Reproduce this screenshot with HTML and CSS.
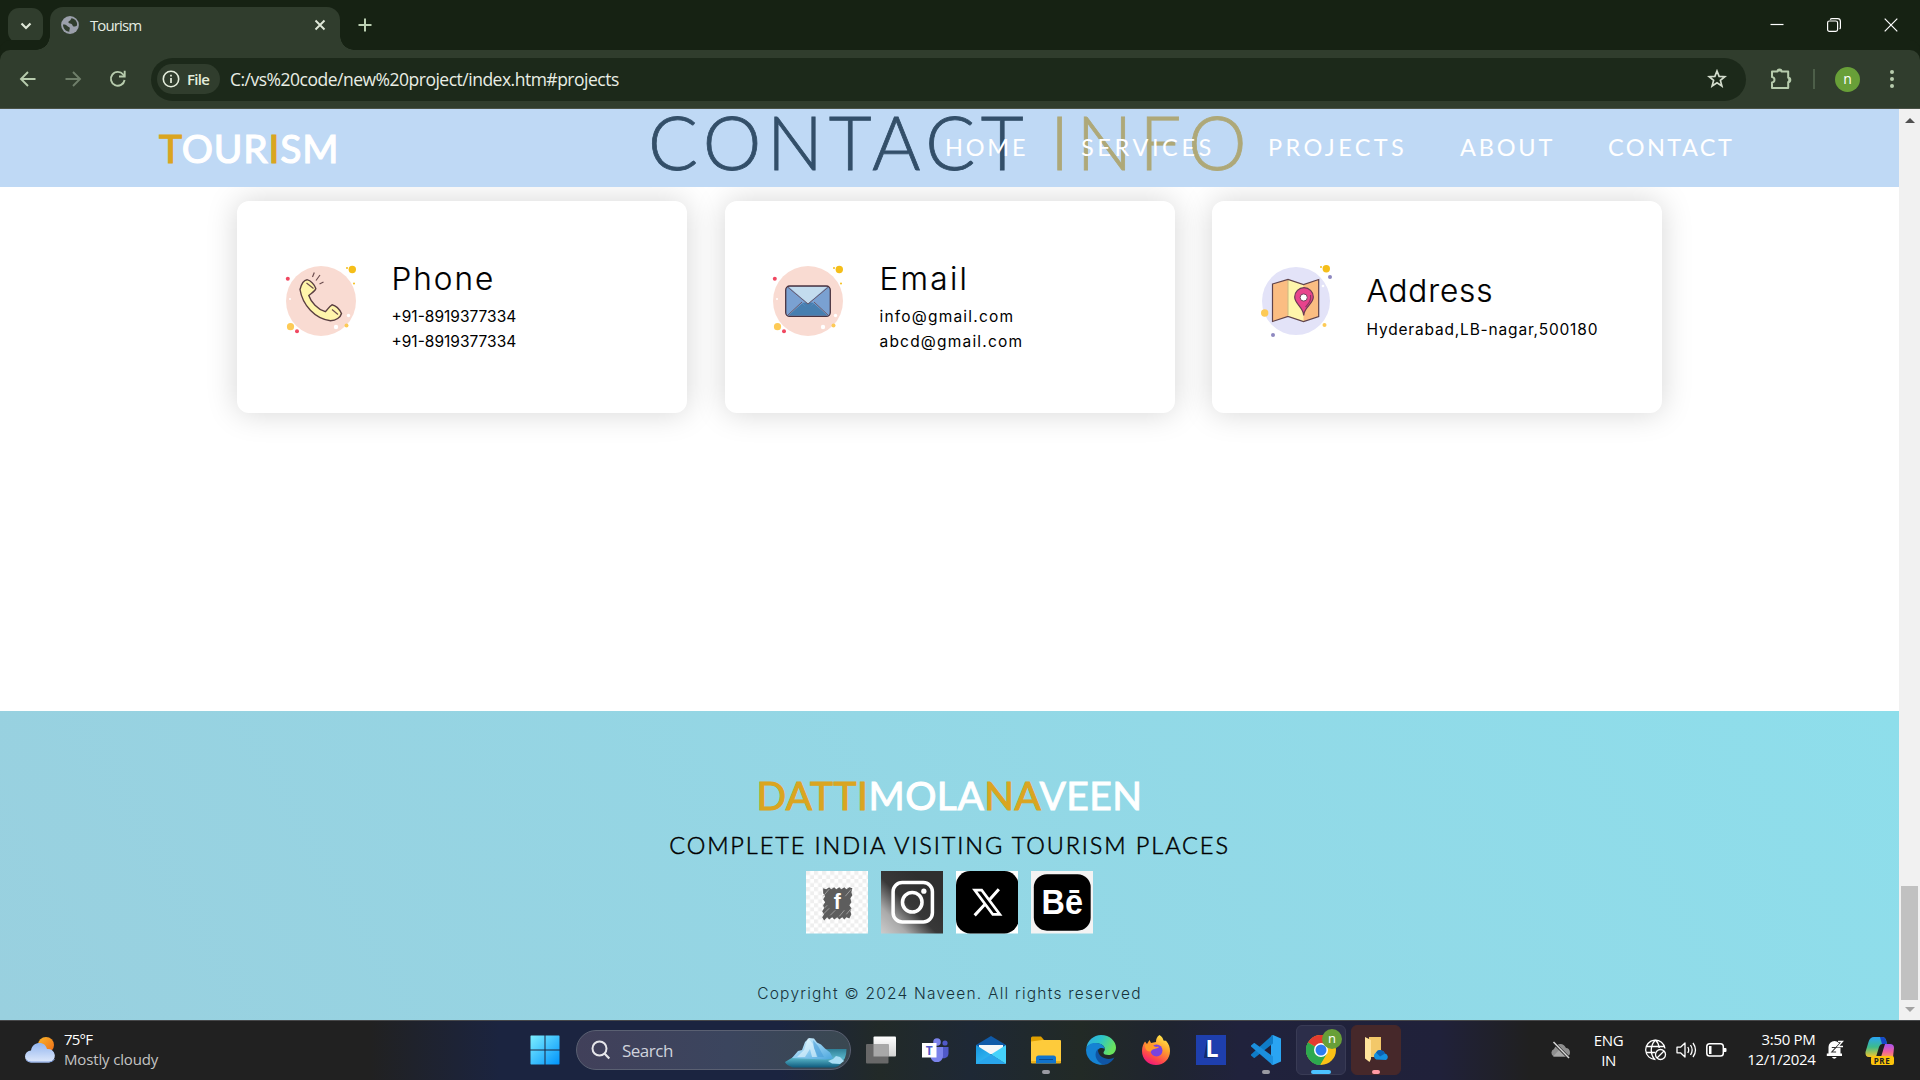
FILE: index.html
```html
<!DOCTYPE html>
<html lang="en">
<head>
<meta charset="utf-8">
<title>Tourism</title>
<link rel="stylesheet" href="styles.css">
</head>
<body>
<div class="screen">

  <div class="tabstrip">
    <div class="tab-search"><svg width="12" height="8" viewBox="0 0 12 8"><path d="M1.5 1.5 6 6l4.500-4.500" fill="none" stroke="#dfe8d8" stroke-width="2.200"/></svg></div>
    <div class="tab">
      <svg class="globe" width="18" height="18" viewBox="0 0 18 18"><circle cx="9" cy="9" r="8.900" fill="#9ba0ab"/><path d="M2 8.500c1.500-.2 3 .2 4.200 1.500.9 1 2.300.8 2.600 2 .2 1.200-.6 1.800-.5 3.800C4.800 15.500 2 12.500 2 8.500zM10.500 2.200c-1 .8-.6 2-1.800 2.600-1.400.7-1.900 1.700-.6 2.400 1.300.6 2.800.2 3.300 1.700.4 1.400 1.300 2 2.600 1.600 1-.3 1.600-.6 2-1 .7-4-2-6.700-5.500-7.300z" fill="#303d2d"/></svg>
      <span class="tab-title">Tourism</span>
      <svg width="12" height="12" viewBox="0 0 12 12"><path d="M1.500 1.500l9 9M10.500 1.500l-9 9" stroke="#dfe8d8" stroke-width="1.900"/></svg>
    </div>
    <div class="new-tab"><svg width="14" height="14" viewBox="0 0 14 14"><path d="M7 .500v13M.500 7h13" stroke="#bcd0b3" stroke-width="2"/></svg></div>
    <div class="window-buttons">
      <svg width="14" height="14" viewBox="0 0 14 14"><path d="M.500 6.500h13" stroke="#fff" stroke-width="1.200"/></svg>
      <svg width="14" height="14" viewBox="0 0 14 14" fill="none" stroke="#fff" stroke-width="1.200"><rect x=".6" y="3" width="10" height="10.400" rx="1.800"/><path d="M3.200 1.600Q3.800.6 5 .6h5.600q2.800 0 2.800 2.800v6q0 1-.8 1.600"/></svg>
      <svg width="14" height="14" viewBox="0 0 14 14"><path d="M.700.700l12.600 12.600M13.300.700L.700 13.300" stroke="#fff" stroke-width="1.200"/></svg>
    </div>
  </div>

  <div class="toolbar">
    <svg class="nav-icon" width="18" height="18" viewBox="0 0 18 18" fill="none" stroke="#b7ccad" stroke-width="1.900"><path d="M16.500 9H2.500M9 2L2 9l7 7"/></svg>
    <svg class="nav-icon" width="18" height="18" viewBox="0 0 18 18" fill="none" stroke="#6f7f6a" stroke-width="1.900"><path d="M1.500 9h14M9 2l7 7-7 7"/></svg>
    <svg class="nav-icon" width="18" height="18" viewBox="0 0 18 18" fill="none" stroke="#b7ccad" stroke-width="1.900"><path d="M15.600 10A6.900 6.900 0 1 1 14.200 4.500L15.500 6"/><path d="M15.700.800V6.500H10"/></svg>
    <div class="omnibox">
      <div class="chip">
        <svg width="18" height="18" viewBox="0 0 18 18"><circle cx="9" cy="9" r="7.700" fill="none" stroke="#e4eddc" stroke-width="1.600"/><path d="M9 8v5M9 4.700v1.700" stroke="#e4eddc" stroke-width="1.700"/></svg>
        <span>File</span>
      </div>
      <span class="url">C:/vs%20code/new%20project/index.htm#projects</span>
      <svg class="star" width="20" height="20" viewBox="0 0 20 20"><path d="M10 2l2.100 5.400 5.800.300-4.500 3.700 1.500 5.600-4.900-3.200L5.100 17l1.500-5.600L2.100 7.700l5.800-.3z" fill="none" stroke="#d3dccd" stroke-width="1.700"/></svg>
    </div>
    <svg class="puzzle" width="22" height="22" viewBox="0 0 22 22"><path d="M2 3.500h5.500a2 2 0 0 1 4 0h6.700v6.300a2 2 0 0 1 0 4.200v6H2v-5.500c3.300-.4 3.300-5.100 0-5.500z" fill="none" stroke="#b7ccad" stroke-width="2" stroke-linejoin="round"/><path d="M7.500 3.500a2 2 0 0 1 4 0zM18.200 9.800a2 2 0 0 1 0 4.200z" fill="#b7ccad"/></svg>
    <span class="divider"></span>
    <span class="avatar">n</span>
    <svg class="dots" width="4" height="18" viewBox="0 0 4 18" fill="#b7ccad"><circle cx="2" cy="2" r="2"/><circle cx="2" cy="9" r="2"/><circle cx="2" cy="16" r="2"/></svg>
  </div>

  <div class="viewport">
    <div class="page">
      <header class="site-header">
        <h1 class="page-title">CONTACT <span>INFO</span></h1>
        <div class="brand"><span>T</span>OUR<span>I</span>SM</div>
        <nav class="menu">
          <a class="m-home">HOME</a><a class="m-services">SERVICES</a><a class="m-projects">PROJECTS</a><a class="m-about">ABOUT</a><a class="m-contact">CONTACT</a>
        </nav>
      </header>

      <main class="cards">
        <section class="card">
          <svg class="card-icon" width="72" height="72" viewBox="0 0 72 72">
            <circle cx="36" cy="36" r="35" fill="#f9dbd2"/>
            <g fill="#fff"><circle cx="5" cy="34" r="1"/><circle cx="63.500" cy="50.500" r="1.700"/><circle cx="51" cy="62" r="2.200"/></g>
            <g fill="#f5be19"><circle cx="67.300" cy="4.500" r="3.700"/><circle cx="62" cy="3" r="1"/><circle cx="69" cy="18.500" r="1"/></g>
            <g fill="#fdca56"><circle cx="5.500" cy="61.700" r="3.600"/><circle cx="61.500" cy="60.500" r="2"/></g>
            <g fill="#f04861"><circle cx="2.800" cy="13.700" r="2"/><circle cx="12" cy="66.200" r="2"/></g>
            <path d="M15 24.500c1.500-6 4.500-9.500 7-9.800 3.500 1 7 4.500 8.800 8.800-.5 2.500-4 4.500-7 7 2 6.500 9 13.800 16.500 16.200 2-1.500 3.500-5.200 6.700-6.900 4 1 7.500 4.500 9.500 8.700-1 4-5.500 7-11 7.200C30 54 17.500 40 15 24.500z" fill="#fff5ab" stroke="#5a3f42" stroke-width="1.400"/>
            <path d="M21.500 18l7 5.500M47 44.500l6 5M27.500 12l1.800-4.500M31 15.500l4-5.500M34.500 19l4-2" fill="none" stroke="#6d4e50" stroke-width="1.200"/>
          </svg>
          <div class="card-text"><h2 class="t-phone">Phone</h2><p class="x-num">+91-8919377334</p><p class="x-num">+91-8919377334</p></div>
        </section>
        <section class="card card-mid">
          <svg class="card-icon" width="72" height="72" viewBox="0 0 72 72">
            <circle cx="36" cy="36" r="35" fill="#f9dbd2"/>
            <g fill="#fff"><circle cx="5" cy="34" r="1"/><circle cx="63.500" cy="50.500" r="1.700"/><circle cx="51" cy="62" r="2.200"/></g>
            <g fill="#f5be19"><circle cx="67.300" cy="4.500" r="3.700"/><circle cx="62" cy="3" r="1"/><circle cx="69" cy="18.500" r="1"/></g>
            <g fill="#fdca56"><circle cx="5.500" cy="61.700" r="3.600"/><circle cx="61.500" cy="60.500" r="2"/></g>
            <g fill="#f04861"><circle cx="2.800" cy="13.700" r="2"/><circle cx="12" cy="66.200" r="2"/></g>
            <rect x="13.700" y="21" width="44.600" height="30.400" rx="4" fill="#7aa1d2"/>
            <path d="M16.500 50.500L30 38.500l6 4.500 6-4.500 13.500 12z" fill="#477fb0"/><path d="M30 38l6-1 6 1-6 6z" fill="#477fb0"/>
            <path d="M16.500 21.500h39L36 38.500z" fill="#c3dcee"/>
            <path d="M15.500 22L36 39l20.500-17M15.500 50.500L30 37M56.500 50.500L42 37" fill="none" stroke="#6a5a6b" stroke-width="1"/>
            <rect x="13.700" y="21" width="44.600" height="30.400" rx="4" fill="none" stroke="#4b3440" stroke-width="1.300"/>
          </svg>
          <div class="card-text"><h2 class="t-email">Email</h2><p class="x-mail">info@gmail.com</p><p class="x-mail">abcd@gmail.com</p></div>
        </section>
        <section class="card card-single">
          <svg class="card-icon" width="72" height="72" viewBox="0 0 72 72">
            <circle cx="35" cy="36" r="34" fill="#e3e3f8"/>
            <g fill="#f5be19"><circle cx="65.300" cy="3.800" r="3.700"/><circle cx="60" cy="2" r="1"/></g>
            <g fill="#fdca56"><circle cx="3.700" cy="48" r="3.700"/><circle cx="63.500" cy="60" r="2"/></g>
            <g fill="#8e88c0"><circle cx="69" cy="12" r="2"/><circle cx="12" cy="70" r="2"/></g>
            <circle cx="62" cy="21" r="1.300" fill="#fff"/>
            <path d="M11.500 19l15.500-4.500 15.500 5L57.700 14.500v37L42.500 56.500 27 51.500 11.500 56.500z" fill="#fbbd82"/>
            <path d="M27 14.500l15.500 5v37L27 51.500z" fill="#fff5ab"/>
            <path d="M27 14.500V50" stroke="#c9ba82" stroke-width="1"/>
            <path d="M11.500 19l15.500-4.500 15.500 5L57.700 14.500v37L42.500 56.500 27 51.500 11.500 56.500z" fill="none" stroke="#5f434b" stroke-width="1.200"/>
            <path d="M42.700 50.500c0-8-9-11.500-9-18.500a9.300 9.300 0 0 1 18.600 0c0 7-9.600 10.500-9.600 18.500z" fill="#e8438c" stroke="#6b3a54" stroke-width="1.200"/>
            <circle cx="42.700" cy="32.500" r="3.600" fill="#fff" stroke="#7b3f5e" stroke-width="1"/>
            <path d="M44.500 42c3-3.500 6-6 5-12" fill="none" stroke="#8d3762" stroke-width="1.200"/>
          </svg>
          <div class="card-text"><h2 class="t-address">Address</h2><p class="x-addr">Hyderabad,LB-nagar,500180</p></div>
        </section>
      </main>

      <footer class="site-footer">
        <div class="owner"><span>DATTI</span>MOLA<span>NA</span>VEEN</div>
        <div class="tagline">COMPLETE INDIA VISITING TOURISM PLACES</div>
        <div class="social">
          <svg viewBox="0 0 62 62">
            <defs><pattern id="check" width="8" height="8" patternUnits="userSpaceOnUse"><rect width="8" height="8" fill="#fff"/><path d="M0 0h4v4H0zM4 4h4v4H4z" fill="#efefef"/></pattern></defs>
            <rect width="62" height="62" fill="url(#check)"/>
            <path d="M17 17l3 1 3-2 2 2 3-2 2 2 3-2 2 2 3-2 2 2 3-2 3 1-1 4 1 3-2 3 1 4-2 3 2 3-1 3 1 3-2 4-3-1-2 2-2-2-3 2-2-2-3 2-2-2-3 2-2-2-3 3-2-3 2-3-2-3 2-3-1-3 2-3-2-3 2-3-2-3z" fill="#5d5d5d"/>
            <path d="M17 25l6-7M17 43l6-6M33 45l5-6M39 25l6-7M18 37l3-3M40 43l5-6M24 44l5-5" stroke="#aaa" stroke-width=".8"/>
            <text x="31" y="38" class="fb">f</text>
          </svg>
          <svg viewBox="0 0 62 62">
            <defs><linearGradient id="insta" x1="0" y1="1" x2=".75" y2=".25"><stop offset="0" stop-color="#ccc"/><stop offset=".28" stop-color="#aaa"/><stop offset=".6" stop-color="#383838"/><stop offset="1" stop-color="#2f2f2f"/></linearGradient></defs>
            <rect width="62" height="62" fill="url(#insta)"/>
            <g fill="none" stroke="#fff" stroke-width="3.500"><rect x="12" y="11.500" width="39" height="39" rx="9"/><circle cx="31" cy="31" r="9.700"/></g><circle cx="42.500" cy="20" r="2.600" fill="#fff"/>
          </svg>
          <svg viewBox="0 0 62 62">
            <rect width="62" height="62" fill="#fff"/><rect width="62" height="62" rx="14" fill="#000"/>
            <path d="M42.500 18L33 28.700M28.500 33.300L18.500 44" stroke="#fff" stroke-width="3"/><path d="M18.500 19h7L43.500 43h-7z" fill="#000" stroke="#fff" stroke-width="2.600"/>
          </svg>
          <svg viewBox="0 0 62 62">
            <rect width="62" height="62" fill="#f3f3f3"/><rect x="2.800" y="3.200" width="56.400" height="56" rx="13" fill="#000"/>
            <text x="31" y="43" class="be" textLength="41" lengthAdjust="spacingAndGlyphs">Bē</text>
          </svg>
        </div>
        <div class="copyright">Copyright © 2024 Naveen. All rights reserved</div>
      </footer>
    </div>

    <div class="scrollbar">
      <span class="arrow-up"></span><span class="thumb"></span><span class="arrow-down"></span>
    </div>
  </div>

  <div class="taskbar">
    <div class="weather">
      <svg width="30" height="26" viewBox="0 0 30 26">
        <defs><linearGradient id="sun" x1="0" y1="0" x2="1" y2="1"><stop offset="0" stop-color="#f9b62b"/><stop offset="1" stop-color="#ee6a16"/></linearGradient><linearGradient id="cloud" x1="0" y1="0" x2="0" y2="1"><stop offset="0" stop-color="#93b6ef"/><stop offset="1" stop-color="#dfe9fb"/></linearGradient></defs>
        <circle cx="21" cy="8" r="8" fill="url(#sun)"/><path d="M6 25.500a6 6 0 0 1 0-12C7 8 10.500 6 14.500 6c4 0 6.500 2.200 7.500 6a6.700 6.700 0 0 1 2 13.500z" fill="url(#cloud)"/><path d="M1 22.500Q3 25 6 25h18q4 0 5.500-3" fill="none" stroke="#7f9fe0" stroke-width="1"/>
      </svg>
      <div><div class="temp">75°F</div><div class="cond">Mostly cloudy</div></div>
    </div>

    <div class="apps">
      <div class="app"><svg width="30" height="30" viewBox="0 0 30 30"><defs><linearGradient id="win" x1="0" y1="0" x2="1" y2="1"><stop offset="0" stop-color="#7deeff"/><stop offset="1" stop-color="#0093fb"/></linearGradient></defs><path d="M1 .500h13.500V14.500H.500V1zM15.500.500H29l.500.500v13.500h-14zM.500 15.500h14v14H1l-.500-.500zM15.500 15.500h14V29l-.5.500H15.500z" fill="url(#win)"/></svg></div>
      <div class="search">
        <svg width="20" height="20" viewBox="0 0 20 20"><circle cx="8.500" cy="8.500" r="7" fill="none" stroke="#e6e6ea" stroke-width="2"/><path d="M13.500 13.500l4.800 5" stroke="#e6e6ea" stroke-width="2.200"/></svg>
        <span>Search</span>
        <svg class="iceberg" width="62" height="32" viewBox="0 0 62 32">
          <defs><linearGradient id="sea" x1="0" y1="0" x2="0" y2="1"><stop offset="0" stop-color="#2f7f97"/><stop offset=".5" stop-color="#58b4c8"/><stop offset="1" stop-color="#0f5b7d"/></linearGradient><linearGradient id="ice" x1="0" y1="0" x2="1" y2="1"><stop offset="0" stop-color="#e6faff"/><stop offset=".5" stop-color="#8fccf0"/><stop offset="1" stop-color="#4aa6dd"/></linearGradient></defs>
          <path d="M38 12h23.500q0 10-6 15-2 3-6 3.500H8Q1 28 0 25l10-6z" fill="url(#sea)"/>
          <path d="M7 21l6-7 4-1 3-8 4-4 5 .500 3 4 4 2 4 4 5 4 3 6-8 1z" fill="url(#ice)"/>
          <path d="M23 1l-4 12-7 7h8l5-8 2 8h5l-4-13z" fill="#eefcff" opacity=".55"/>
          <path d="M28 3l1 8 4 9h6l-6-11z" fill="#4b9fd8" opacity=".6"/>
          <path d="M43 24l5-2 3-3 4 1 4 4-4 3-8-.5z" fill="#a9def5"/>
        </svg>
      </div>
      <div class="app first"><svg width="30" height="28" viewBox="0 0 30 28"><defs><linearGradient id="tv" x1="0" y1="0" x2="0" y2="1"><stop offset="0" stop-color="#fff"/><stop offset="1" stop-color="#d2d2d2"/></linearGradient></defs><rect x="7.500" y=".500" width="22.500" height="20" rx="1" fill="url(#tv)"/><rect y="8" width="22.500" height="19.500" rx="1" fill="#686868"/><path d="M7.500 8h15v12.500h-15z" fill="#a8a8a8"/></svg></div>
      <div class="app"><svg width="28" height="24" viewBox="0 0 28 24"><circle cx="15" cy="4" r="3.800" fill="#7b83eb"/><circle cx="23" cy="5" r="2.600" fill="#5059c9"/><path d="M17 9h9.500v6.500a5 5 0 0 1-9.500 2z" fill="#5059c9"/><path d="M8 9h13v8.500a6 6 0 0 1-12.500 1z" fill="#7b83eb"/><rect x="0" y="5" width="14.500" height="14.500" fill="#fff"/><text x="7.250" y="16.500" class="teams-t">T</text></svg></div>
      <div class="app"><svg width="30" height="28" viewBox="0 0 30 28"><defs><linearGradient id="ml" x1="0" y1="0" x2="1" y2="1"><stop offset="0" stop-color="#1593dc"/><stop offset=".5" stop-color="#2db0ee"/><stop offset="1" stop-color="#2b9de6"/></linearGradient></defs><path d="M0 9L15 0l15 9-3 5H3z" fill="#0f5aa8"/><path d="M3 9h24v9H3z" fill="#f4f6f8"/><path d="M0 9l15 9.500L30 28H0z" fill="url(#ml)"/><path d="M30 9L15 18.500 30 28z" fill="#45d2fb"/><path d="M0 28L15 18.500 30 28z" fill="#29a5ec"/></svg></div>
      <div class="app run"><svg width="30" height="28" viewBox="0 0 30 28"><path d="M0 2q0-1.500 1.500-1.500H10l3 3.500v5H0z" fill="#e0a000"/><path d="M0 5.500l11-1.500h18q1 0 1 1v22H0z" fill="#fecb3b"/><path d="M0 25h30v1.500q0 1-1 1H1q-1 0-1-1z" fill="#e9ae1b"/><path d="M5 27.500V22q0-2.500 2.500-2.500h15Q25 19.500 25 22v5.500z" fill="#1174cd"/><path d="M8 23.500h14" stroke="#0a4c92" stroke-width="1"/></svg></div>
      <div class="app"><svg width="30" height="30" viewBox="0 0 30 30"><defs><linearGradient id="e1" x1="0" y1="0" x2="1" y2=".4"><stop offset="0" stop-color="#30a7e8"/><stop offset=".5" stop-color="#2cc5c9"/><stop offset="1" stop-color="#6ae35e"/></linearGradient></defs><path d="M.3 13A15 15 0 0 1 15 0c9 0 15 6.500 15 12.500 0 5-3.500 7.500-7.500 7.500-3 0-5-1-5-2.300 0-.9 1.300-1.500 1.300-3.700 0-3-3-5.500-8-5.500C6 8.500 2 10 .3 13z" fill="url(#e1)"/><path d="M0 15C.5 9.500 5.500 8 9.500 8c6 0 9 3 9.200 6-3-2.500-8-.5-8 4.500 0 5.500 5 10.500 10 10A14.800 14.800 0 0 1 0 15z" fill="#1583d3"/><path d="M12 14c-4 3-3.800 12.500 5.500 15.700 4 .3 9-3 10.800-7.200-4.500 3-16.800 1.500-16.300-8.500z" fill="#0f55a5"/></svg></div>
      <div class="app"><svg width="30" height="30" viewBox="0 0 30 30"><defs><linearGradient id="ff" x1=".8" y1="0" x2=".3" y2="1"><stop offset="0" stop-color="#fff04f"/><stop offset=".4" stop-color="#ffa02d"/><stop offset=".75" stop-color="#ff4a4a"/><stop offset="1" stop-color="#f0157f"/></linearGradient></defs><path d="M18.500 0c2.500 1.500 3.500 3.500 4 5.500 1 .2 2 .3 2.500.3 3 3 4 7 4 10.200C29 24 23 30 15 30S1 24 1 16c0-4 1.500-7.500 3-9.500l2 2.500L8.500 5l1.500 3 5-1c0-3 1-5.500 3.500-7z" fill="url(#ff)"/><circle cx="15.500" cy="15.500" r="6" fill="#7a43e0"/><path d="M4 10c3-1.500 7-1.500 9.500 1.500 1.500 1 3 0 4.500.5-2 2.500-7 1-8 4.500C5 17 4 13 4 10z" fill="#ff9a2a"/></svg></div>
      <div class="app"><svg width="30" height="30" viewBox="0 0 30 30"><path d="M0 0h30v30H0z" fill="#1e3fae"/><path d="M8 22l3-17v16l10 2H8z" fill="#122a6b"/><text x="16" y="22" class="l-t">L</text></svg></div>
      <div class="app run"><svg width="30" height="30" viewBox="0 0 30 30"><path d="M22 0l8 3.500v23L22 30l-2-1V1z" fill="#2aa4f2"/><path d="M22 0v8.500L3.500 23H3L0 20.500v-1L21 .500z" fill="#0f7cc8"/><path d="M3 8L0 10.500v1L21 29.500l1 .5v-8.500L3.500 8z" fill="#1b8fdd"/></svg></div>
      <div class="app active"><svg width="30" height="30" viewBox="0 0 30 30"><circle cx="15" cy="15" r="15" fill="#fbc116"/><path d="M15 15L2 7.500A15 15 0 0 1 28 7.500z" fill="#e33b2e"/><path d="M2 7.500A15 15 0 0 0 14 30l7-11.500L15 15z" fill="#2da94f"/><path d="M2 7.500L8.700 18.500A7 7 0 0 0 19 20.500L14 30A15 15 0 0 1 2 7.500z" fill="#2da94f"/><circle cx="15" cy="15" r="7" fill="#fff"/><circle cx="15" cy="15" r="5.500" fill="#2d7cf0"/></svg><span class="app-badge">n</span></div>
      <div class="app alert"><svg width="24" height="28" viewBox="0 0 24 28"><path d="M5 1h12v17H5z" fill="#e8b04a"/><path d="M5 1h12v20H5z" fill="#f3c869"/><path d="M1 1l6 3v19l-1.500 3L1 22.500z" fill="#ffe39b"/><path d="M12 23.500a4 4 0 0 1 0-7 5 5 0 0 1 9 1 3.500 3.500 0 0 1 1 6.500z" fill="#1490df"/><path d="M12 16.500a5 5 0 0 1 9 1l-5 3z" fill="#0c62b4"/></svg></div>
    </div>

    <div class="tray">
      <svg class="cloud-off" width="22" height="18" viewBox="0 0 22 18"><path d="M4 15.500a4 4 0 0 1 0-7.500C6 3 13 .500 16 7a4.500 4.500 0 0 1 1.500 8.500z" fill="#8f8f8f"/><path d="M10 8l8 7.500H3z" fill="#a8a8a8"/><path d="M2.500.500l16 16" stroke="#202020" stroke-width="3"/><path d="M3.500 1l15.500 16" stroke="#d8d8d8" stroke-width="1.500"/></svg>
      <div class="lang"><div>ENG</div><div>IN</div></div>
      <svg class="t-net" width="22" height="22" viewBox="0 0 22 22" fill="none" stroke="#fff" stroke-width="1.300"><path d="M10.500 20.500A9.700 9.700 0 1 1 20 9.500M1.500 7.500h18M1.500 13.500H10M10.500 1C5 6.500 5 15 9.500 20.500M10.500 1c2 2 3.500 5 3.700 8"/><circle cx="15.500" cy="15.500" r="5"/><path d="M12 19l7-7"/></svg>
      <svg class="t-vol" width="21" height="18" viewBox="0 0 21 18" fill="none" stroke="#fff" stroke-width="1.300"><path d="M1 6.200h3.500L9 2v14l-4.500-4.200H1z" stroke-linejoin="round"/><path d="M11.800 6q1.800 3 0 6M14.500 4q3.300 5 0 10M17 2q5 7 0 14"/></svg>
      <svg class="t-bat" width="21" height="14" viewBox="0 0 21 14"><rect x=".8" y=".8" width="16.500" height="12.200" rx="2.800" fill="none" stroke="#fff" stroke-width="1.500"/><path d="M3 3h2.500v8H3zM18 5h1.500q1 0 1 1v2q0 1-1 1H18z" fill="#fff"/></svg>
      <div class="clock"><div class="time">3:50 PM</div><div class="date">12/1/2024</div></div>
      <svg class="t-bell" width="18" height="20" viewBox="0 0 18 20"><path d="M8.500 1a6 6 0 0 1 6 6v6.500h1.500V16H.8v-2.500h1.700V7a6 6 0 0 1 6-6zM5.800 17h5q-2.500 3.500-5 0z" fill="#fff"/><path d="M12 1.500h4.500L12 6.500h5" fill="none" stroke="#202020" stroke-width="2.600"/><path d="M12 1.500h4.500L12 6.500h5" fill="none" stroke="#fff" stroke-width="1.300"/><path d="M5.800 7.500h4l-4 4.500h4.300" fill="none" stroke="#333" stroke-width="1.100"/></svg>
      <div class="copilot">
        <svg width="30" height="28" viewBox="0 0 30 28"><defs><linearGradient id="cp1" x1="0" y1="0" x2="0" y2="1"><stop offset="0" stop-color="#2aa5f5"/><stop offset=".5" stop-color="#3dbb8b"/><stop offset="1" stop-color="#f5c52b"/></linearGradient><linearGradient id="cp2" x1="0" y1="0" x2="0" y2="1"><stop offset="0" stop-color="#a653f0"/><stop offset=".6" stop-color="#f2609d"/><stop offset="1" stop-color="#fb9a5b"/></linearGradient></defs><path d="M9 0h8q3 0 4 3l1 4h-5q-2 0-3 3l-3 10H4q-4 0-3.500-5l3-10Q5 0 9 0z" fill="url(#cp1)"/><path d="M15 0h2q3 0 4 3l1 4h-5z" fill="#1648c8"/><path d="M20 7h5q4 0 4 4l-1 9H16z" fill="url(#cp2)"/></svg>
        <span>PRE</span>
      </div>
    </div>
  </div>
</div>
</body>
</html>
```
FILE: styles.css
```css
* { box-sizing: border-box; }
body { margin: 0; }
h1, h2, p { margin: 0; font-weight: 400; }
svg { display: block; flex: none; }

.screen {
  width: 1920px; height: 1080px; overflow: hidden;
  display: flex; flex-direction: column;
  background: #303d2d;
  font-family: "Open Sans", "Noto Sans", sans-serif;
}

/* browser frame */
.tabstrip { height: 50px; background: #162213; display: flex; align-items: flex-start; padding-left: 8px; flex: none; }
.tab-search { width: 35px; height: 35px; margin-top: 8px; border-radius: 11px; background: #303d2d; display: flex; align-items: center; justify-content: center; }
.tab {
  position: relative; width: 290px; height: 43px; margin: 7px 0 0 7px; padding: 0 14px 7px 11px;
  background: #303d2d; border-radius: 13px 13px 0 0; display: flex; align-items: center; gap: 11px;
}
.tab::before, .tab::after { content: ""; position: absolute; bottom: 0; width: 14px; height: 14px; }
.tab::before { left: -14px; background: radial-gradient(circle at 0 0, transparent 13.5px, #303d2d 14px); }
.tab::after { right: -14px; background: radial-gradient(circle at 100% 0, transparent 13.5px, #303d2d 14px); }
.tab, .tab::before, .tab::after { z-index: 1; }
.tab-title { flex: 1; font-size: 15px; line-height: 20px; letter-spacing: -0.9px; color: #e6ece2; }
.new-tab { margin: 18px 0 0 18px; }
.window-buttons { margin: 18px 22px 0 auto; display: flex; gap: 43px; }

.toolbar { height: 59px; background: #303d2d; border-bottom: 1px solid #4b5347; display: flex; align-items: center; padding: 0 26px 0 19px; flex: none; border-radius: 10px 10px 0 0; box-shadow: 0 -10px 0 0 #162213; }
.nav-icon { margin-right: 27px; }
.omnibox { width: 1597px; height: 43px; margin-left: -3px; border-radius: 22px; background: #1c291a; display: flex; align-items: center; padding: 0 19px 0 6px; }
.chip { width: 63px; height: 30px; border-radius: 15px; background: #303d2d; display: flex; align-items: center; gap: 7px; padding-left: 5px; font-size: 15px; font-weight: 600; letter-spacing: -0.7px; color: #e4eddc; }
.url { margin-left: 10px; flex: 1; font-size: 17.500px; letter-spacing: -0.5px; color: #e9eee5; }
.puzzle { margin-left: 24px; }
.divider { width: 2px; height: 20px; margin-left: 21px; background: #4d5f49; }
.avatar { width: 25px; height: 25px; margin-left: 20px; border-radius: 50%; background: #689f38; color: #fff; font-size: 14px; line-height: 23px; text-align: center; }
.dots { margin-left: 30px; }

/* web page */
.viewport { height: 911px; display: flex; flex: none; }
.page { width: 1899px; background: #fff; display: flex; flex-direction: column; overflow: hidden; }
.site-header { position: relative; z-index: 1; height: 78px; flex: none; background: #bfd9f5; display: flex; align-items: center; padding: 0 0 0 159px; font-family: Lato, sans-serif; }
.page-title { position: absolute; left: 648px; top: -12px; font-size: 74px; font-weight: 300; line-height: 90px; letter-spacing: 5.700px; word-spacing: -3px; white-space: pre; color: #334f69; -webkit-text-stroke: 0.8px; }
.page-title span { color: #aea878; letter-spacing: 7.200px; }
.brand { position: relative; width: 786px; font-size: 39px; line-height: 48px; font-weight: 400; letter-spacing: 0.850px; color: #fff; -webkit-text-stroke: 1.200px; }
.brand span, .owner span { color: #daa520; }
.menu { position: relative; top: -1px; display: flex; font-size: 23.500px; line-height: 30px; letter-spacing: 2.800px; color: #fff; }
.m-home { width: 136px; } .m-services { width: 187px; letter-spacing: 3.600px; } .m-projects { width: 192px; letter-spacing: 3.400px; } .m-about { width: 148px; } .m-contact { letter-spacing: 2.400px; }

.cards { display: flex; gap: 37.500px; padding: 14px 0 0 237px; height: 524px; flex: none; }
.card { width: 450px; height: 212px; border-radius: 12px; background: #fff; box-shadow: 0 0 31px rgba(0, 0, 0, 0.17); display: flex; padding: 64px 0 0 48px; }
.card-mid { padding-left: 47px; }
.card-mid .card-text { margin-left: 36px; }
.card-text { margin: -6px 0 0 34.500px; font-family: Inter, sans-serif; color: #000; }
.card-text h2 { font-size: 31.500px; line-height: 40px; margin-bottom: 5px; font-weight: 300; -webkit-text-stroke: 0.2px; }
.card-text p { font-size: 15.500px; line-height: 25px; white-space: nowrap; font-weight: 380; }
.card-single { padding-left: 49px; }
.card-single .card-text { margin: 6px 0 0 33.500px; }
.card-single .card-text p { position: relative; top: 1px; }
.t-phone { letter-spacing: 2px; } .t-email { letter-spacing: 2.300px; } .t-address { letter-spacing: 0.900px; }
.x-num { letter-spacing: 0; } .x-mail { letter-spacing: 1.200px; } .x-addr { letter-spacing: 0.820px; }

.site-footer {
  height: 309px; flex: none; display: flex; flex-direction: column; align-items: center; padding-top: 60px;
  background: linear-gradient(60deg, #99d0df, #8edeeb); font-family: Lato, sans-serif;
}
.owner { font-size: 39px; line-height: 48px; font-weight: 400; letter-spacing: 0.500px; color: #fff; -webkit-text-stroke: 1px; }
.tagline { font-size: 23.500px; line-height: 30px; margin-top: 11px; font-weight: 300; letter-spacing: 1.900px; color: #000; -webkit-text-stroke: 0.500px; }
.social { display: flex; gap: 12.500px; margin-top: 11px; }
.social svg { width: 62.500px; height: 62.500px; }
.fb { font: 700 21px "Liberation Sans", sans-serif; fill: #fff; text-anchor: middle; }
.be { font: 700 34px "Liberation Sans", sans-serif; fill: #fff; text-anchor: middle; }
.copyright { margin-top: 48px; font: 300 15.500px/24px Inter, sans-serif; letter-spacing: 1.230px; color: #17333b; }

.scrollbar { width: 21px; background: #f1f1f1; display: flex; flex-direction: column; align-items: center; justify-content: flex-end; padding-bottom: 8px; }
.arrow-up, .arrow-down { border: 5px solid transparent; width: 0; height: 0; }
.arrow-up { border-bottom-color: #505050; border-top: 0; margin: 0 0 auto; position: relative; top: 9px; }
.thumb { width: 17px; height: 114px; background: #c1c1c1; margin-bottom: 7px; }
.arrow-down { border-top-color: #a3a3a3; border-bottom: 0; }

/* taskbar */
.taskbar {
  height: 60px; border-top: 1px solid #47484a; display: flex; color: #fff; flex: none;
  background: linear-gradient(90deg, #212121 370px, #1b2440 500px, #1b2440 780px, #222a28 880px, #1e2835 970px, #222a26 1080px, #1f2430 1170px, #20223c 1240px, #20213a 1440px, #202020 1530px);
}
.weather { width: 517px; padding: 8px 0 0 25px; display: flex; gap: 9px; font-size: 15px; line-height: 20px; }
.weather svg { margin-top: 8px; }
.temp { letter-spacing: -0.8px; }
.cond { color: #c4c4c4; letter-spacing: -0.15px; }
.apps { display: flex; padding-top: 3px; }
.app { position: relative; width: 55px; height: 52px; display: flex; align-items: center; justify-content: center; }
.search { width: 275px; height: 40px; margin: 6px 0 0 4px; border: 1px solid #5a6072; border-radius: 20px; background: linear-gradient(90deg, #41405a, #3b455e 55%, #3a4851); display: flex; align-items: center; padding-left: 14px; gap: 11px; font-size: 17px; letter-spacing: -0.5px; color: #d0d3dc; }
.iceberg { margin: 0 3px 0 auto; align-self: flex-end; }
.first { margin-left: 2.500px; }
.run::after, .active::after, .alert::after { content: ""; position: absolute; bottom: 2px; left: 50%; width: 8px; margin-left: -4px; height: 4px; border-radius: 2px; background: #9a9aa2; }
.active::before, .alert::before { content: ""; position: absolute; inset: 1px 2.500px 1px; border-radius: 6px; background: #2c2e4a; border: 1px solid #393b55; }
.alert::before { background: #46282a; border-color: #46282a; }
.active::after { width: 20px; margin-left: -10px; background: #4cc2ff; }
.alert::after { background: #ff99a4; }
.app svg { position: relative; }
.app-badge { position: absolute; left: 28.500px; top: 5px; width: 20px; height: 20px; border-radius: 50%; background: #689f38; font-size: 13px; line-height: 18px; text-align: center; }
.teams-t { font: 700 12px "Open Sans", sans-serif; fill: #5059c9; text-anchor: middle; }
.l-t { font: 700 23px "Open Sans", sans-serif; fill: #fff; text-anchor: middle; }

.tray { flex: 1; display: flex; align-items: flex-start; padding-left: 146px; font-size: 15px; line-height: 20px; }
.cloud-off { margin-top: 20px; }
.lang { width: 40px; margin: 9px 0 0 17px; text-align: center; letter-spacing: -0.4px; }
.t-net { margin: 18px 0 0 16px; }
.t-vol { margin: 20px 0 0 9px; }
.t-bat { margin: 22px 0 0 9px; }
.clock { width: 89px; margin-top: 8px; text-align: right; letter-spacing: -0.3px; }
.t-bell { margin: 19px 0 0 10px; }
.copilot { position: relative; margin: 16px 0 0 21px; }
.copilot span { position: absolute; left: 6px; top: 19px; width: 23px; height: 9px; border-radius: 2px; background: #fcc30b; color: #222; font: 700 8px/9px "Open Sans", sans-serif; text-align: center; letter-spacing: 0.5px; }
```
